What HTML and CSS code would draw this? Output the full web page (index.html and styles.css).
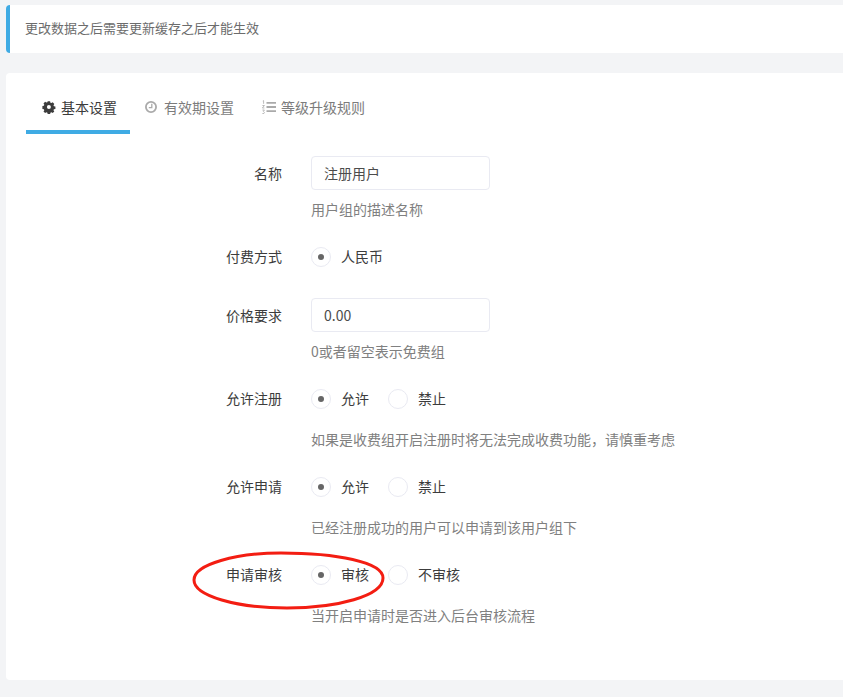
FILE: index.html
```html
<!DOCTYPE html>
<html lang="zh-CN">
<head>
  <meta charset="UTF-8">
  <meta name="viewport" content="width=device-width, initial-scale=1.0">
  <title>用户组设置</title>
  <link rel="stylesheet" href="styles.css">
</head>
<body>
  <div class="page">
    <div class="alert">更改数据之后需要更新缓存之后才能生效</div>

    <div class="card">
      <ul class="tabs">
        <li class="tab active">
          <svg class="tab-icon" viewBox="0 0 14 14"><path fill="currentColor" fill-rule="evenodd" d="M5.700 1.200h2.400l.3 1.500 1 .4 1.300-.8 1.600 1.600-.8 1.300.4 1 1.500.3v2.400l-1.500.3-.4 1 .8 1.300-1.600 1.600-1.300-.8-1 .4-.3 1.500H5.700l-.3-1.500-1-.4-1.300.8-1.600-1.600.8-1.300-.4-1-1.500-.3V6l1.500-.3.4-1-.8-1.300 1.600-1.600 1.300.8 1-.4zM6.900 5.100a2 2 0 1 0 0 4 2 2 0 0 0 0-4z"/></svg>
          基本设置
        </li>
        <li class="tab">
          <svg class="tab-icon" viewBox="0 0 14 14"><circle cx="6" cy="7" r="5.100" fill="none" stroke="#aaa" stroke-width="1.800"/><path fill="none" stroke="#aaa" stroke-width="1.300" d="M6.800 3.800v3.900H3.800"/></svg>
          有效期设置
        </li>
        <li class="tab">
          <svg class="tab-icon" viewBox="0 0 14 14"><path fill="none" stroke="#aaa" stroke-width="1.800" d="M4.500 2.800H14M4.500 7H14M4.500 11.200H14"/><path fill="none" stroke="#aaa" stroke-width=".8" d="M.8 1l.8-.4v3.200M.4 5.500h2L.4 8h2M.4 10h2l-1 1.300 1 1.200-.5 1H.4"/></svg>
          等级升级规则
        </li>
      </ul>

      <div class="form">
        <div class="form-row">
          <label class="form-label">名称</label>
          <div class="form-body">
            <input class="text-input" type="text" value="注册用户">
            <p class="help">用户组的描述名称</p>
          </div>
        </div>

        <div class="form-row radio-row">
          <label class="form-label">付费方式</label>
          <div class="form-body">
            <div class="radios">
              <span class="radio checked"></span><span class="radio-text">人民币</span>
            </div>
          </div>
        </div>

        <div class="form-row">
          <label class="form-label">价格要求</label>
          <div class="form-body">
            <input class="text-input" type="text" value="0.00">
            <p class="help">0或者留空表示免费组</p>
          </div>
        </div>

        <div class="form-row radio-row">
          <label class="form-label">允许注册</label>
          <div class="form-body">
            <div class="radios">
              <span class="radio checked"></span><span class="radio-text">允许</span>
              <span class="radio"></span><span class="radio-text">禁止</span>
            </div>
            <p class="help">如果是收费组开启注册时将无法完成收费功能，请慎重考虑</p>
          </div>
        </div>

        <div class="form-row radio-row">
          <label class="form-label">允许申请</label>
          <div class="form-body">
            <div class="radios">
              <span class="radio checked"></span><span class="radio-text">允许</span>
              <span class="radio"></span><span class="radio-text">禁止</span>
            </div>
            <p class="help">已经注册成功的用户可以申请到该用户组下</p>
          </div>
        </div>

        <div class="form-row radio-row">
          <label class="form-label">申请审核</label>
          <div class="form-body">
            <div class="radios">
              <span class="radio checked"></span><span class="radio-text">审核</span>
              <span class="radio"></span><span class="radio-text">不审核</span>
            </div>
            <p class="help">当开启申请时是否进入后台审核流程</p>
          </div>
        </div>
      </div>
    </div>

    <!-- hand drawn red mark over the last row -->
    <svg class="scribble" viewBox="0 0 196 62"><path fill="none" stroke="#f31d12" stroke-width="3" d="M3 30C3 14 46 3 90 3c55 0 102 9 102 25 0 18-46 30-96 30C46 58 3 46 3 30z"/></svg>
  </div>
</body>
</html>
```

FILE: styles.css
```css
* { box-sizing: border-box; }
html, body { margin: 0; height: 100%; }
body { background: #f3f4f6; color: #3c3c3c; font-family: "Noto Sans CJK SC", "Open Sans", sans-serif; font-size: 14px; overflow: hidden; }
.page { position: relative; padding: 5px 0 0 6px; }

.alert { height: 48px; padding-left: 15px; line-height: 46px; font-size: 13px; color: #6c6c6c; background: #fff; border-left: 4px solid #3fabe4; border-radius: 4px 0 0 4px; }

.card { height: 607px; margin-top: 20px; padding: 14px 20px 0; background: #fff; border-radius: 4px 0 0 4px; }
.tabs { display: flex; height: 47px; margin: 0; padding: 0; list-style: none; }
.tab { display: flex; align-items: center; gap: 5px; padding: 0 13px 4px 15px; color: #7c7c7c; border-bottom: 4px solid transparent; white-space: nowrap; }
.tab.active { padding-left: 16px; color: #3c3c3c; border-bottom-color: #3fabe4; }
.tab-icon { width: 14px; height: 14px; }

.form { padding-top: 22px; }
.form-row { display: flex; margin-bottom: 20px; }
.form-label { width: 285px; padding-right: 29px; line-height: 34px; text-align: right; }
.radio-row .form-label { line-height: 32px; }
.form-body { flex: 1; }

.text-input { display: block; width: 179px; height: 34px; padding: 0 12px; font: inherit; color: #4c4c4c; border: 1px solid #e9eaf2; border-radius: 4px; outline: none; }
.help { margin: 10px 0 0; line-height: 18px; padding-bottom: 2px; color: #808080; }

.radios { display: flex; align-items: flex-start; height: 38px; padding-top: 7px; line-height: 19px; }
.radio { position: relative; flex: none; width: 20px; height: 20px; border: 1px solid #e9eaf2; border-radius: 50%; }
.radio.checked::after { content: ""; position: absolute; left: 6px; top: 6px; width: 6px; height: 6px; background: #666; border-radius: 50%; }
.radio-text { margin: 0 19px 0 10px; }

.scribble { position: absolute; left: 191px; top: 550px; width: 196px; height: 62px; }
```
